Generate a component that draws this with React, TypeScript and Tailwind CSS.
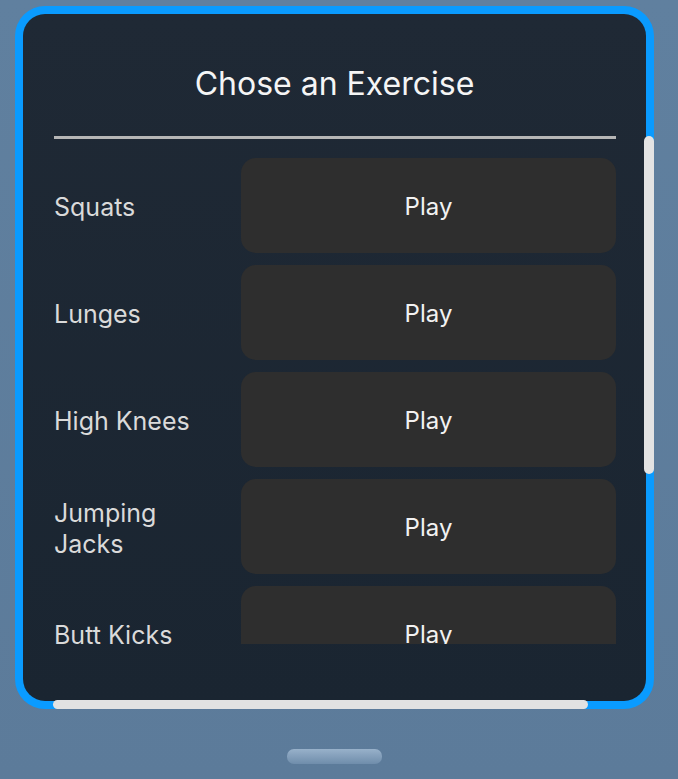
import React from "react";

const exercises = ["Squats", "Lunges", "High Knees", "Jumping Jacks", "Butt Kicks"];

export default function App() {
  return (
    <div
      className="relative w-[678px] h-[779px] overflow-hidden bg-gradient-to-b from-[#60809f] to-[#5c7b9a] pt-[6px]"
      style={{ fontFamily: "Inter, 'Noto Sans', sans-serif" }}
    >
      <div className="relative ml-[15px] w-[639px] h-[703px] rounded-[30px] bg-[#0a9bff] p-[8px]">
        <div className="flex h-full flex-col rounded-[22px] bg-gradient-to-b from-[#1f2935] to-[#1a2531]">
          <div className="pt-[51px] text-center text-[32px] leading-[38px] text-[#f5f5f5]">
            Chose an Exercise
          </div>
          <div className="ml-[31px] mr-[30px] mt-[33px] h-[3px] bg-[#b6b6b6]" />
          <div className="ml-[31px] mr-[30px] mt-[7px] h-[498px] overflow-hidden">
            <div className="flex flex-col gap-[12px] pt-[12px]">
              {exercises.map((name) => (
                <div key={name} className="flex items-center gap-[12px]">
                  <div className="w-[175px] shrink-0 pt-[4px] text-[25px] leading-[31px] text-[#dadada]">
                    {name}
                  </div>
                  <div className="flex h-[95px] flex-1 items-center justify-center rounded-[15px] bg-[#2e2e2e] pt-[3px] text-[24px] text-[#f2f2f2]">
                    Play
                  </div>
                </div>
              ))}
            </div>
          </div>
        </div>
        <div className="absolute left-[38px] top-[694px] h-[9px] w-[535px] rounded-full bg-[#e2e2e2]" />
        <div className="absolute left-[629px] top-[130px] h-[338px] w-[10px] rounded-full bg-[#e3e3e3]" />
      </div>
      <div className="mt-[40px] flex justify-center pr-[9px]">
        <div className="h-[15px] w-[95px] rounded-[7px] bg-gradient-to-b from-[#98b1ca] to-[#6f8dab]" />
      </div>
    </div>
  );
}
